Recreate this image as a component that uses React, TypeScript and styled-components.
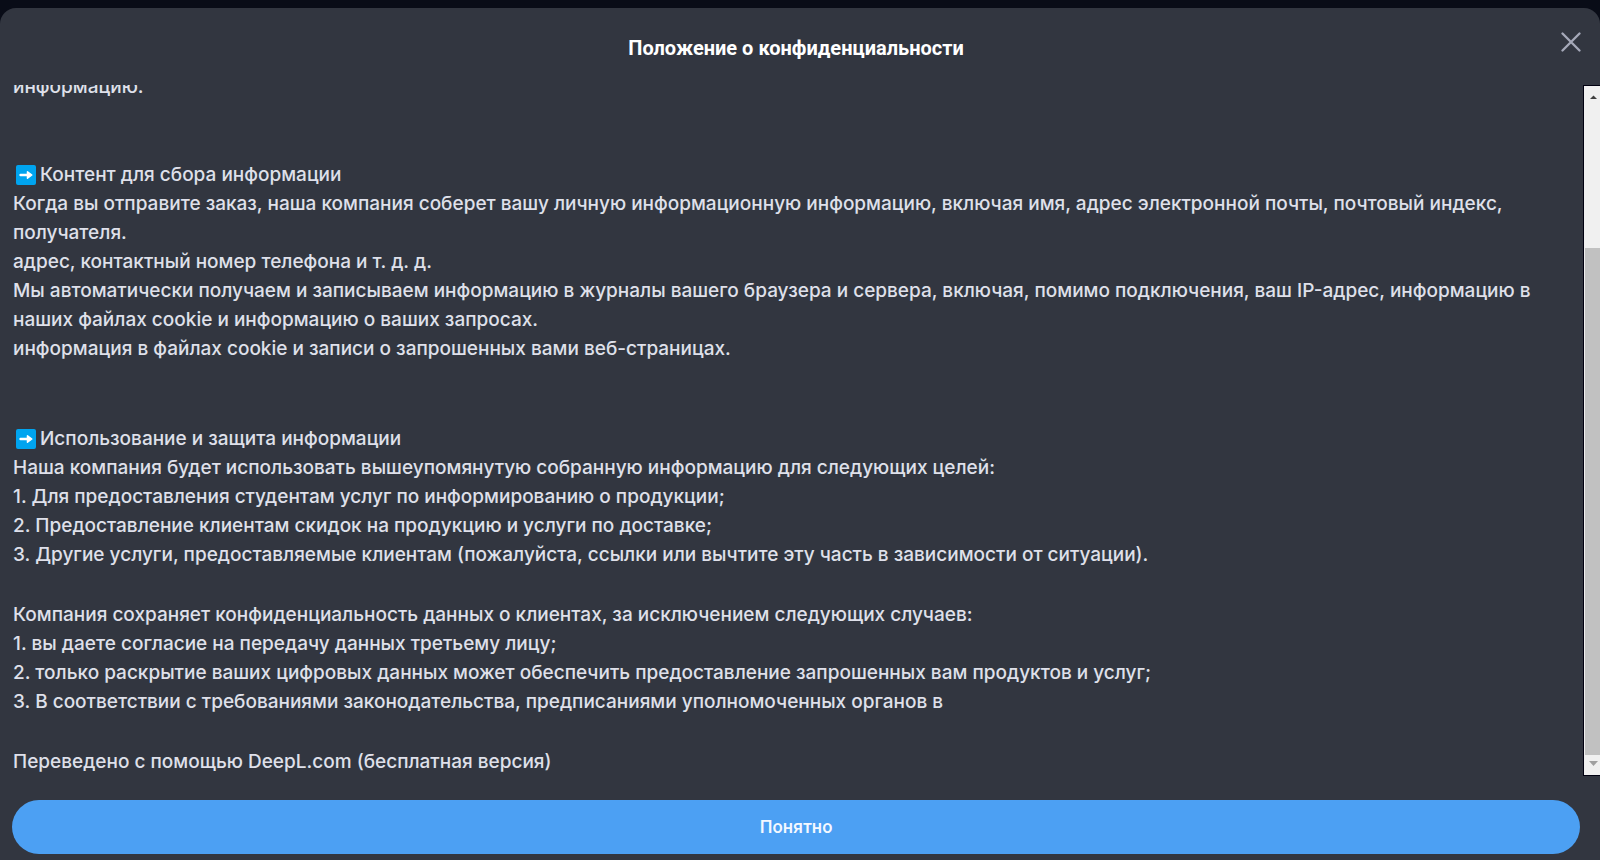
import React from "react";
import styled, { createGlobalStyle } from "styled-components";

const GlobalStyle = createGlobalStyle`
  *, *::before, *::after { box-sizing: border-box; }
  body { margin: 0; background: #090c17; }
`;

const Backdrop = styled.div`
  display: flex;
  height: 100vh;
  padding-top: 8px;
  background: #090c17;
`;

const Dialog = styled.section`
  flex: 1;
  min-width: 0;
  display: flex;
  flex-direction: column;
  overflow: hidden;
  background: #323640;
  border-radius: 16px 16px 0 0;
`;

const Header = styled.header`
  display: grid;
  grid-template-columns: 28px 1fr 28px;
  height: 77px;
  flex: none;
  padding: 20px 15px 0 7px;
`;

const Title = styled.h1`
  grid-column: 2;
  margin: 0;
  padding-top: 8px;
  color: #fff;
  font: 700 20px/24px Roboto, "Liberation Sans", sans-serif;
  text-align: center;
`;

const CloseButton = styled.button`
  display: grid;
  place-items: center;
  width: 28px;
  height: 28px;
  padding: 0;
  border: 0;
  background: none;
  cursor: pointer;
`;

const Viewport = styled.div`
  flex: 1;
  min-height: 0;
  display: flex;
`;

const Content = styled.div`
  flex: 1;
  min-width: 0;
  display: flex;
  flex-direction: column;
  justify-content: flex-end;
  overflow: hidden;
  padding: 0 13px;
  color: #dfe0ea;
  font: 500 19px/29px Inter, "Liberation Sans", sans-serif;
`;

const Block = styled.div<{ $gap: number }>`
  flex: none;
  margin-bottom: ${(p) => p.$gap}px;
`;

const Line = styled.p`
  margin: 0;
`;

const Heading = styled.h2`
  display: flex;
  align-items: center;
  gap: 4px;
  margin: 0;
  padding-left: 3px;
  font: inherit;
`;

const ScrollTrack = styled.div`
  flex: none;
  width: 17px;
  display: flex;
  flex-direction: column;
  border: 1px solid #000010;
  border-right: 0;
  background: #f0f0f0;
`;

const ScrollArrow = styled.svg`
  flex: none;
  width: 16px;
  height: 20px;
`;

const ScrollSpace = styled.div`
  flex: 142;
`;

const ScrollThumb = styled.div`
  flex: 506;
  margin-left: 1px;
  background: #c1c1c1;
`;

const Footer = styled.footer`
  flex: none;
  display: flex;
  padding: 24px 20px 6px 12px;
`;

const AcceptButton = styled.button`
  flex: 1;
  height: 54px;
  border: 0;
  border-radius: 27px;
  background: #4ca0f3;
  color: #f4f8ff;
  font: 500 18px/24px Roboto, "Liberation Sans", sans-serif;
  cursor: pointer;
`;

const ArrowIcon = () => (
  <svg width="20" height="20" viewBox="0 0 20 20" aria-hidden="true">
    <rect width="20" height="20" rx="2" fill="#00a4ef" />
    <path d="M4.500 10h8" stroke="#fff" strokeWidth="2.400" strokeLinecap="round" />
    <path d="M11.500 6.800 15.800 10l-4.300 3.200z" fill="#fff" stroke="#fff" strokeWidth="1.500" strokeLinejoin="round" />
  </svg>
);

const SectionHeading = ({ children }: { children: React.ReactNode }) => (
  <Heading>
    <ArrowIcon />
    {children}
  </Heading>
);

const blocks: { heading?: string; lines: string[]; gap: number }[] = [
  { lines: ["информацию."], gap: 59 },
  {
    heading: "Контент для сбора информации",
    lines: [
      "Когда вы отправите заказ, наша компания соберет вашу личную информационную информацию, включая имя, адрес электронной почты, почтовый индекс, получателя.",
      "адрес, контактный номер телефона и т. д. д.",
      "Мы автоматически получаем и записываем информацию в журналы вашего браузера и сервера, включая, помимо подключения, ваш IP-адрес, информацию в наших файлах cookie и информацию о ваших запросах.",
      "информация в файлах cookie и записи о запрошенных вами веб-страницах.",
    ],
    gap: 61,
  },
  {
    heading: "Использование и защита информации",
    lines: [
      "Наша компания будет использовать вышеупомянутую собранную информацию для следующих целей:",
      "1. Для предоставления студентам услуг по информированию о продукции;",
      "2. Предоставление клиентам скидок на продукцию и услуги по доставке;",
      "3. Другие услуги, предоставляемые клиентам (пожалуйста, ссылки или вычтите эту часть в зависимости от ситуации).",
    ],
    gap: 31,
  },
  {
    lines: [
      "Компания сохраняет конфиденциальность данных о клиентах, за исключением следующих случаев:",
      "1. вы даете согласие на передачу данных третьему лицу;",
      "2. только раскрытие ваших цифровых данных может обеспечить предоставление запрошенных вам продуктов и услуг;",
      "3. В соответствии с требованиями законодательства, предписаниями уполномоченных органов в",
    ],
    gap: 31,
  },
  { lines: ["Переведено с помощью DeepL.com (бесплатная версия)"], gap: 0 },
];

export default function App() {
  return (
    <>
      <GlobalStyle />
      <Backdrop>
        <Dialog role="dialog" aria-labelledby="dialog-title">
          <Header>
            <Title id="dialog-title">Положение о конфиденциальности</Title>
            <CloseButton type="button" aria-label="Закрыть">
              <svg width="20" height="20" viewBox="0 0 20 20" aria-hidden="true">
                <path d="M1.500 1.500l17 17M18.500 1.500l-17 17" stroke="#a6a9b9" strokeWidth="2.300" strokeLinecap="round" />
              </svg>
            </CloseButton>
          </Header>
          <Viewport>
            <Content>
              {blocks.map((block, i) => (
                <Block key={i} $gap={block.gap}>
                  {block.heading && <SectionHeading>{block.heading}</SectionHeading>}
                  {block.lines.map((line) => (
                    <Line key={line}>{line}</Line>
                  ))}
                </Block>
              ))}
            </Content>
            <ScrollTrack aria-hidden="true">
              <ScrollArrow viewBox="0 0 16 20">
                <path d="M6 13h7L9.500 9.500z" fill="#404040" />
              </ScrollArrow>
              <ScrollSpace />
              <ScrollThumb />
              <ScrollArrow viewBox="0 0 16 20">
                <path d="M5 6h9L9.500 11z" fill="#a0a0a0" />
              </ScrollArrow>
            </ScrollTrack>
          </Viewport>
          <Footer>
            <AcceptButton type="button">Понятно</AcceptButton>
          </Footer>
        </Dialog>
      </Backdrop>
    </>
  );
}
